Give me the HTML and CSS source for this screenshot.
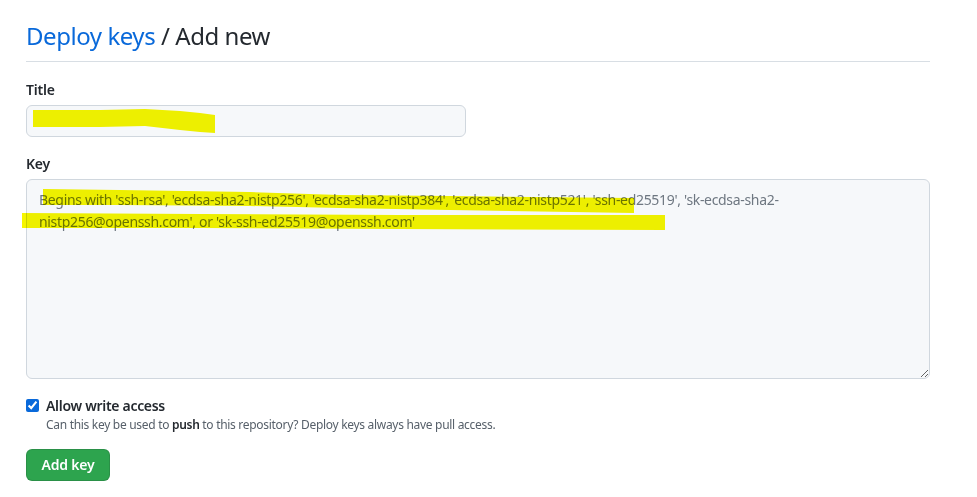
FILE: index.html
```html
<!DOCTYPE html>
<html lang="en">
<head>
<meta charset="utf-8">
<title>Deploy keys / Add new</title>
<link rel="stylesheet" href="styles.css">
</head>
<body>
<main class="page">
  <h2 class="subhead"><a class="crumb" href="#">Deploy keys</a> / Add new</h2>
  <form class="form">
    <div class="group group-first">
      <label class="label" for="title">Title</label>
      <input class="input title-input" id="title" type="text">
    </div>
    <div class="group">
      <label class="label" for="key">Key</label>
      <textarea class="input key-input" id="key" placeholder="Begins with 'ssh-rsa', 'ecdsa-sha2-nistp256', 'ecdsa-sha2-nistp384', 'ecdsa-sha2-nistp521', 'ssh-ed25519', 'sk-ecdsa-sha2-nistp256@openssh.com', or 'sk-ssh-ed25519@openssh.com'"></textarea>
    </div>
    <div class="check">
      <label class="check-label"><input class="checkbox" type="checkbox" checked> Allow write access</label>
      <p class="note">Can this key be used to <strong>push</strong> to this repository? Deploy keys always have pull access.</p>
    </div>
    <button class="btn" type="button">Add key</button>
  </form>
  <svg class="redact" width="977" height="497" viewBox="0 0 977 497" aria-hidden="true">
    <polygon points="33,110 100,110 145,109 180,111 200,113 215,115 215,133 200,132 180,130 145,126 100,127 33,127" />
    <polygon points="43,189 120,190 250,192 340,195 450,196 634,198 634,213 450,210 340,208 250,206 120,205 43,205" />
    <polygon points="22,213 200,214 400,215 665,215 665,230 400,229 200,228 22,228" />
  </svg>
</main>
</body>
</html>
```

FILE: styles.css
```css
* { box-sizing: border-box; }
html, body { margin: 0; background: #ffffff; }
body {
  font-family: "Noto Sans", "Liberation Sans", sans-serif;
  color: #24292f;
  font-size: 14px;
}
.page {
  position: relative;
  width: 977px;
  height: 497px;
  padding: 18px 47px 0 26px;
}
.subhead {
  margin: 0;
  padding-bottom: 7px;
  border-bottom: 1px solid #d8dee4;
  font-size: 24px;
  font-weight: 400;
  line-height: 36px;
  letter-spacing: -0.45px;
}
.crumb { color: #0969da; text-decoration: none; }
.form { display: flex; flex-direction: column; align-items: flex-start; }
.group { display: flex; flex-direction: column; width: 100%; margin-top: 17px; }
.group-first { margin-top: 18px; }
.label { font-weight: 600; line-height: 20px; margin-bottom: 5px; letter-spacing: -0.2px; }
.input {
  font: inherit;
  font-size: 14px;
  line-height: 20px;
  color: #24292f;
  background: #f6f8fa;
  border: 1px solid #d0d7de;
  border-radius: 6px;
  padding: 5px 12px;
}
.title-input { width: 440px; height: 32px; }
.key-input {
  width: 904px;
  height: 200px;
  padding: 9px 12px 8px;
  line-height: 22px;
  letter-spacing: -0.32px;
  resize: vertical;
}
.key-input::placeholder { color: #6e7781; }
.check { margin-top: 17px; padding-left: 20px; position: relative; }
.check-label { font-weight: 600; line-height: 20px; display: block; letter-spacing: -0.3px; }
.checkbox {
  position: absolute;
  left: 0;
  top: 3px;
  margin: 0;
  width: 13px;
  height: 13px;
  accent-color: #0969da;
}
.note { margin: 0; font-size: 12px; line-height: 18px; color: #57606a; letter-spacing: -0.3px; }
.note strong { color: #24292f; font-weight: 600; }
.btn {
  margin-top: 15px;
  font: inherit;
  font-size: 14px;
  font-weight: 600;
  color: #ffffff;
  background: #2da44e;
  border: 1px solid rgba(27,31,36,0.15);
  border-radius: 6px;
  height: 32px;
  width: 84px;
  padding: 0;
  line-height: 20px;
  letter-spacing: -0.2px;
}
.redact {
  position: absolute;
  left: 0;
  top: 0;
  pointer-events: none;
  mix-blend-mode: multiply;
}
.redact polygon { fill: #f6f600; }
```
